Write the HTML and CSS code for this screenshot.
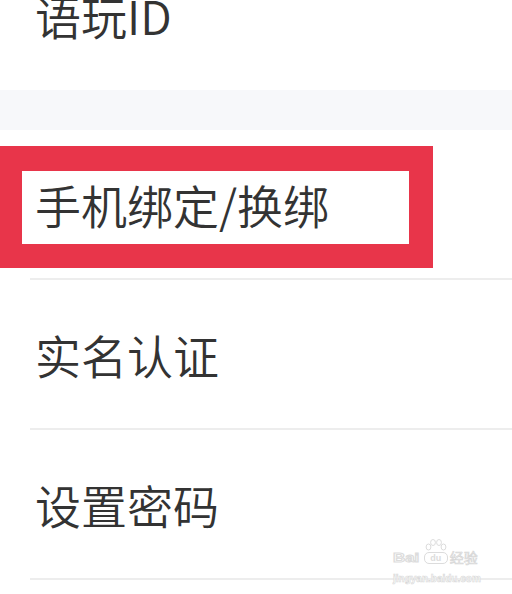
FILE: index.html
```html
<!DOCTYPE html>
<html lang="zh-CN">
<head>
    <meta charset="UTF-8">
    <meta name="viewport" content="width=device-width, initial-scale=1.0">
    <title>账号与安全</title>
    <link rel="stylesheet" href="styles.css">
</head>
<body>
    <div class="page">
        <!-- Account group -->
        <section class="group">
            <div class="row row-top">
                <span class="label">语玩ID</span>
            </div>
        </section>

        <div class="spacer"></div>

        <!-- Security group -->
        <section class="group">
            <div class="row">
                <span class="label">手机绑定/换绑</span>
                <div class="mark"></div>
            </div>
            <div class="row">
                <span class="label">实名认证</span>
            </div>
            <div class="row">
                <span class="label">设置密码</span>
            </div>
        </section>

        <!-- Watermark -->
        <div class="watermark">
            <div class="wm-logo">
                <span class="wm-bai">Bai</span>
                <span class="wm-du">
                    <svg class="wm-paw" width="22" height="13" viewBox="0 0 22 13">
                        <ellipse cx="3.5" cy="8" rx="2.4" ry="3" fill="#fff" stroke="#dcdcdc" stroke-width="1"/>
                        <ellipse cx="8" cy="3.5" rx="2.4" ry="3" fill="#fff" stroke="#dcdcdc" stroke-width="1"/>
                        <ellipse cx="14" cy="3.5" rx="2.4" ry="3" fill="#fff" stroke="#dcdcdc" stroke-width="1"/>
                        <ellipse cx="18.5" cy="8" rx="2.4" ry="3" fill="#fff" stroke="#dcdcdc" stroke-width="1"/>
                    </svg>
                    <span class="wm-du-text">du</span>
                </span>
                <span class="wm-cn">经验</span>
            </div>
            <div class="wm-url">jingyan.baidu.com</div>
        </div>
    </div>
</body>
</html>
```

FILE: styles.css
```css
/* Base */
body {
    margin: 0;
    background-color: #fff;
    font-family: "Noto Sans CJK SC", "Noto Sans", sans-serif;
    color: #333;
    overflow: hidden;
}

.page {
    position: relative;
    width: 512px;
    height: 594px;
    overflow: hidden;
}

/* Settings rows */
.group {
    background-color: #fff;
}

.row {
    position: relative;
    display: flex;
    align-items: center;
    height: 148px;
    margin-left: 30px;
    padding-left: 5px;
    border-bottom: 2px solid #ededed;
}

.row-top {
    height: 90px;
    align-items: flex-end;
    border-bottom: none;
}

.row-top .label {
    margin-bottom: 52px;
}

.label {
    font-size: 46px;
    font-weight: 350;
    line-height: 1;
}

.spacer {
    height: 40px;
    background-color: #f7f8fa;
}

/* Red highlight drawn over the phone row */
.mark {
    position: absolute;
    top: 16px;
    left: -30px;
    width: 387px;
    height: 73px;
    border-style: solid;
    border-color: #e8354a;
    border-width: 25px 24px 24px 22px;
}

/* Baidu watermark */
.watermark {
    position: absolute;
    left: 393px;
    top: 539px;
    color: #fff;
    font-family: "Liberation Sans", Arial, sans-serif;
}

.wm-logo {
    display: flex;
    align-items: flex-end;
    gap: 2px;
}

.wm-bai {
    display: inline-block;
    font-size: 12px;
    font-weight: bold;
    line-height: 1;
    transform: scaleX(1.4);
    transform-origin: left bottom;
    margin-right: 10px;
    -webkit-text-stroke: 1px #dcdcdc;
}

.wm-du {
    display: flex;
    flex-direction: column;
    align-items: center;
}

.wm-paw {
    display: block;
}

.wm-du-text {
    display: block;
    width: 22px;
    height: 10px;
    border: 1px solid #dcdcdc;
    border-radius: 5px;
    font-size: 9px;
    font-weight: bold;
    line-height: 10px;
    text-align: center;
    color: #dcdcdc;
}

.wm-cn {
    font-family: "Noto Sans CJK SC", sans-serif;
    font-size: 14px;
    font-weight: 400;
    line-height: 1;
    color: #fff;
    -webkit-text-stroke: 0.7px #d6d6d6;
}

.wm-url {
    margin-top: 10px;
    font-size: 10px;
    font-weight: bold;
    line-height: 1;
    color: #fff;
    -webkit-text-stroke: 0.6px #d8d8d8;
}
```
